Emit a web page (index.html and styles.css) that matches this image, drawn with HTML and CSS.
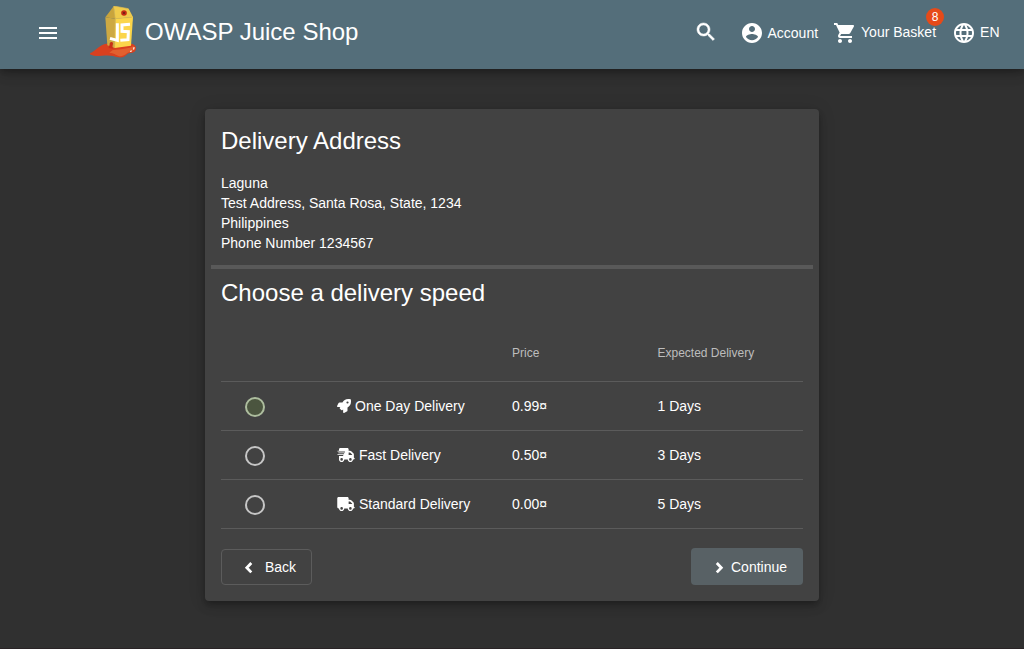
FILE: index.html
```html
<!DOCTYPE html>
<html lang="en">
<head>
<meta charset="utf-8">
<title>OWASP Juice Shop</title>
<link rel="stylesheet" href="styles.css">
</head>
<body>
<header class="toolbar">
  <button class="menu" aria-label="Open menu"><svg class="icon24" viewBox="0 0 24 24"><path d="M3 18h18v-2H3v2zm0-5h18v-2H3v2zm0-7v2h18V6H3z"/></svg></button>
  <svg class="logo" viewBox="30 18 141 156">
    <path fill="#d9401f" d="M28 160C38 158 44 150 54 143C66 133 82 129 96 130L150 131C162 131 169 138 168 147C167 155 160 159 151 159C142 159 140 166 132 170C122 175 110 171 99 168C84 164 66 168 48 168C38 167 29 165 28 160Z"/>
    <path fill="#e2602f" d="M100 150C116 148 150 146 160 138C166 146 162 153 151 156C140 157 138 165 126 168C112 171 108 160 88 158C94 154 96 151 100 150Z"/>
    <path fill="#cda943" d="M76 52L106 56L104 144L82 136Z"/>
    <path fill="#fbd54a" d="M106 56L159 51L153 137L104 144Z"/>
    <path fill="#c9a43c" d="M101 19L76 52L106 56Z"/>
    <path fill="#f0cb4c" d="M101 18L146 26L159 51L106 56Z"/>
    <path fill="none" stroke="#dfbd52" stroke-width="2" d="M101 19L106 56L104 143M106 56L157 52M101 18L145 26"/>
    <ellipse cx="132" cy="39" rx="8.500" ry="8" fill="#c22a14"/>
    <path fill="#7b2115" d="M129 36h6v6h-6z"/>
    <path fill="none" stroke="#fff" stroke-width="9" d="M112 70V121L90 115M150 73L126 75V94L145 95L144 119L121 121"/>
    <path fill="#c93018" d="M89 133C88 125 98 124 99 130C99 136 95 141 100 146L86 144Z"/>
    <path fill="none" stroke="#ffe6dc" stroke-width="4" stroke-linecap="round" d="M162 143L161 147M154 153L152 154"/>
  </svg>
  <span class="brand">OWASP Juice Shop</span>
  <span class="spacer"></span>
  <svg class="icon24 search" viewBox="0 0 24 24"><path d="M15.5 14h-.79l-.28-.27C15.41 12.59 16 11.11 16 9.5 16 5.91 13.09 3 9.5 3S3 5.91 3 9.5 5.91 16 9.5 16c1.61 0 3.09-.59 4.23-1.57l.27.28v.79l5 4.99L20.49 19l-4.99-5zm-6 0C7.01 14 5 11.99 5 9.5S7.01 5 9.5 5 14 7.01 14 9.5 11.99 14 9.5 14z"/></svg>
  <button class="nav account"><svg class="icon24" viewBox="0 0 24 24"><path d="M12 2C6.48 2 2 6.48 2 12s4.48 10 10 10 10-4.480 10-10S17.520 2 12 2zm0 3c1.660 0 3 1.340 3 3s-1.340 3-3 3-3-1.340-3-3 1.340-3 3-3zm0 14.200c-2.500 0-4.710-1.280-6-3.220.030-1.990 4-3.080 6-3.080 1.990 0 5.970 1.090 6 3.080-1.290 1.940-3.500 3.220-6 3.220z"/></svg><span>Account</span></button>
  <button class="nav basket"><svg class="icon24" viewBox="0 0 24 24"><path d="M7 18c-1.100 0-1.990.9-1.990 2S5.900 22 7 22s2-.9 2-2-.9-2-2-2zM1 2v2h2l3.600 7.590-1.350 2.450c-.160.280-.250.610-.250.960 0 1.100.9 2 2 2h12v-2H7.420c-.140 0-.250-.110-.250-.250l.030-.120.900-1.630h7.450c.750 0 1.410-.410 1.750-1.030l3.580-6.490c.080-.140.120-.310.120-.480 0-.550-.450-1-1-1H5.210l-.940-2H1zm16 16c-1.100 0-1.990.9-1.990 2s.890 2 1.990 2 2-.9 2-2-.9-2-2-2z"/></svg><span class="raised">Your Basket</span><span class="badge">8</span></button>
  <button class="nav lang"><svg class="icon24" viewBox="0 0 24 24"><path d="M11.990 2C6.470 2 2 6.480 2 12s4.470 10 9.990 10C17.520 22 22 17.520 22 12S17.520 2 11.990 2zm6.930 6h-2.950c-.320-1.250-.780-2.450-1.380-3.560 1.840.630 3.370 1.910 4.330 3.560zM12 4.040c.830 1.200 1.480 2.530 1.910 3.960h-3.820c.430-1.430 1.080-2.760 1.910-3.960zM4.260 14C4.100 13.360 4 12.690 4 12s.1-1.360.260-2h3.380c-.080.660-.140 1.320-.140 2s.060 1.340.140 2H4.260zm.820 2h2.950c.320 1.250.780 2.450 1.380 3.560-1.840-.630-3.370-1.900-4.330-3.560zm2.950-8H5.080c.960-1.660 2.490-2.930 4.330-3.560C8.810 5.550 8.350 6.750 8.030 8zM12 19.960c-.830-1.200-1.480-2.530-1.910-3.960h3.820c-.430 1.430-1.080 2.760-1.910 3.960zM14.340 14H9.660c-.090-.660-.160-1.320-.160-2s.070-1.350.160-2h4.680c.090.650.160 1.320.160 2s-.070 1.340-.160 2zm.250 5.560c.6-1.110 1.060-2.310 1.380-3.560h2.950c-.960 1.650-2.490 2.930-4.330 3.560zM16.360 14c.080-.660.140-1.320.140-2s-.060-1.340-.140-2h3.380c.160.640.260 1.310.260 2s-.1 1.360-.260 2h-3.380z"/></svg><span class="raised">EN</span></button>
</header>
<main class="card">
  <h1 class="heading">Delivery Address</h1>
  <address class="address">
    <div>Laguna</div>
    <div>Test Address, Santa Rosa, State, 1234</div>
    <div>Philippines</div>
    <div>Phone Number 1234567</div>
  </address>
  <div class="divider"></div>
  <h1 class="heading speed">Choose a delivery speed</h1>
  <div class="table">
    <div class="row head"><span></span><span></span><span>Price</span><span>Expected Delivery</span></div>
    <div class="row"><span class="radio focused"></span><span class="method"><svg class="rocket" viewBox="0 0 512 512"><path d="M505.120 19.090c-1.190-5.530-6.660-11-12.210-12.180C460.600 0 435.500 0 410.400 0 307.200 0 245.270 55.200 199.050 128H94.830c-16.340 0-35.560 11.880-42.870 26.480L2.580 253.200c-1.670 3.600-2.400 6.800-2.580 10.800a24 24 0 0 0 24 24h103.840l-22.470 22.470c-11.370 11.360-12.990 32.250 0 45.250l50.910 50.910c11.160 11.190 32.160 13.160 45.260 0l22.460-22.470V488a24 24 0 0 0 24 24c4 0 7.200-.9 10.700-2.600l98.700-49.340c14.600-7.300 26.500-26.500 26.500-42.870V312.800c72.600-46.300 128-108.400 128-211.100.1-25.200.1-50.300-6.800-82.610zM384 168a40 40 0 1 1 0-80 40 40 0 0 1 0 80z"/></svg>One Day Delivery</span><span>0.99¤</span><span>1 Days</span></div>
    <div class="row"><span class="radio"></span><span class="method"><svg class="truck" viewBox="0 0 640 512"><path d="M112 0C85.500 0 64 21.500 64 48V96H16c-8.800 0-16 7.200-16 16s7.200 16 16 16H272c8.800 0 16 7.200 16 16s-7.200 16-16 16H48c-8.800 0-16 7.200-16 16s7.200 16 16 16H240c8.800 0 16 7.200 16 16s-7.200 16-16 16H16c-8.800 0-16 7.200-16 16s7.200 16 16 16H208c8.800 0 16 7.200 16 16s-7.200 16-16 16H64V416c0 53 43 96 96 96s96-43 96-96H384c0 53 43 96 96 96s96-43 96-96h32c17.700 0 32-14.300 32-32s-14.300-32-32-32V237.300c0-17-6.700-33.300-18.700-45.300L512 114.700c-12-12-28.300-18.700-45.300-18.700H416V48c0-26.500-21.500-48-48-48H112zM544 237.300V256H416V160h50.700L544 237.300zM160 368a48 48 0 1 1 0 96 48 48 0 1 1 0-96zm272 48a48 48 0 1 1 96 0 48 48 0 1 1-96 0z"/></svg>Fast Delivery</span><span>0.50¤</span><span>3 Days</span></div>
    <div class="row"><span class="radio"></span><span class="method"><svg class="truck" viewBox="0 0 640 512"><path d="M48 0C21.500 0 0 21.500 0 48V368c0 26.500 21.500 48 48 48H64c0 53 43 96 96 96s96-43 96-96H384c0 53 43 96 96 96s96-43 96-96h32c17.700 0 32-14.300 32-32s-14.300-32-32-32V237.300c0-17-6.700-33.300-18.700-45.300L512 114.700c-12-12-28.300-18.700-45.300-18.700H416V48c0-26.500-21.500-48-48-48H48zM416 160h50.700L544 237.300V256H416V160zM112 416a48 48 0 1 1 96 0 48 48 0 1 1-96 0zm368-48a48 48 0 1 1 0 96 48 48 0 1 1 0-96z"/></svg>Standard Delivery</span><span>0.00¤</span><span>5 Days</span></div>
  </div>
  <div class="actions">
    <button class="btn back"><svg class="chevron" viewBox="0 0 24 24"><path d="M14.300 8L9.800 12.700L14.300 17.400"/></svg>Back</button>
    <button class="btn continue"><svg class="chevron" viewBox="0 0 24 24"><path d="M9.800 8L14.300 12.700L9.800 17.400"/></svg>Continue</button>
  </div>
</main>
</body>
</html>
```
FILE: styles.css
```css
* { box-sizing: border-box; }
html { height: 100%; overflow: hidden; }
body {
  margin: 0;
  height: 100%;
  border-bottom: 1px solid #2a2426;
  background: #303030;
  color: #fff;
  font: 14px/20px "Liberation Sans", Arial, sans-serif;
}
button {
  padding: 0;
  border: 0;
  background: none;
  color: inherit;
  font: inherit;
}
svg { display: block; flex: none; fill: currentColor; }
.toolbar {
  position: relative;
  display: flex;
  align-items: center;
  height: 69px;
  padding: 0 24px 4px 36px;
  background: #546e7a;
  box-shadow: 0 3px 5px -1px rgba(0,0,0,.2), 0 6px 10px rgba(0,0,0,.14), 0 1px 18px rgba(0,0,0,.12);
}
.icon24 { width: 24px; height: 24px; }
.logo { width: 47px; height: 52px; margin: 0 0 1px 30px; }
.brand { margin-left: 8px; padding-bottom: 2px; font-size: 24px; line-height: 32px; }
.spacer { flex: 1; }
.search { margin: 0 22px 2px 0; stroke: currentColor; stroke-width: .5; }
.nav { position: relative; display: flex; align-items: center; white-space: nowrap; }
.nav span { margin-left: 3px; }
.nav .raised { padding-bottom: 2px; }
.account { margin-right: 15px; }
.basket { margin-right: 16px; }
.basket span { margin-left: 4px; }
.lang span { margin-left: 4px; }
.nav .badge {
  position: absolute;
  top: -13px;
  right: -8px;
  width: 18px;
  height: 18px;
  margin: 0;
  border-radius: 50%;
  background: #e64a19;
  font-size: 12px;
  line-height: 18px;
  text-align: center;
}
.lang { margin-right: .5px; }
.card {
  width: 614px;
  height: 492px;
  margin: 40px auto 0;
  padding: 16px;
  border-radius: 4px;
  background: #424242;
  box-shadow: 0 3px 5px -1px rgba(0,0,0,.2), 0 6px 10px rgba(0,0,0,.14), 0 1px 18px rgba(0,0,0,.12);
}
.heading { margin: 0; font-size: 24px; font-weight: 400; line-height: 32px; }
.address { margin-top: 16px; font-style: normal; }
.divider { height: 4px; margin: 12px -10px 0; background: #595959; }
.speed { margin-top: 8px; }
.row {
  display: grid;
  grid-template-columns: 116px 175px 145.500px 1fr;
  align-items: center;
  height: 49px;
  border-bottom: 1px solid #5b5b5b;
}
.head {
  height: 56px;
  margin-top: 17px;
  padding-bottom: 2px;
  color: #bdbdbd;
  font-size: 12px;
}
.radio {
  width: 20px;
  height: 20px;
  margin: 2px 0 0 24px;
  border: 2px solid #c6c6c6;
  border-radius: 50%;
}
.focused { border-color: #adbd9e; background: #4b553f; }
.method { display: flex; align-items: center; }
.rocket { width: 14px; height: 14px; margin-right: 4px; }
.truck { width: 18px; height: 14px; margin-right: 4px; }
.actions { display: flex; justify-content: space-between; align-items: center; margin-top: 19px; }
.btn { display: flex; align-items: center; border-radius: 4px; }
.back { width: 91px; height: 36px; padding-left: 15px; border: 1px solid #5c5c5c; }
.continue { width: 112px; height: 37px; padding-left: 16px; background: #586165; }
.chevron { width: 24px; height: 24px; fill: none; stroke: currentColor; stroke-width: 2.8; }
.back .chevron { margin-right: 4px; }
```
